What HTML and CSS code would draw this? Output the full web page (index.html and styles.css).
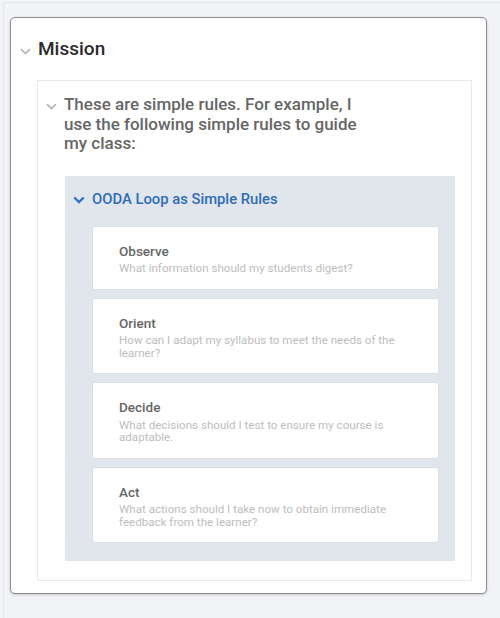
FILE: index.html
```html
<!DOCTYPE html>
<html>
<head>
<meta charset="utf-8">
<link rel="stylesheet" href="styles.css">
</head>
<body>
<div class="page">
  <section class="outer">
    <header class="outer-head">
      <svg class="chev chev-gray" width="11" height="7" viewBox="0 0 11 7"><path d="M1 1.2 L5.5 5.5 L10 1.2" fill="none" stroke="#b5b5b5" stroke-width="1.7"/></svg>
      <h1 class="outer-title">Mission</h1>
    </header>
    <div class="inner">
      <div class="inner-head">
        <svg class="chev chev-gray2" width="11" height="7" viewBox="0 0 11 7"><path d="M1 1.2 L5.5 5.5 L10 1.2" fill="none" stroke="#b5b5b5" stroke-width="1.7"/></svg>
        <p class="inner-title">These are simple rules. For example, I use the following simple rules to guide my class:</p>
      </div>
      <div class="panel">
        <div class="panel-head">
          <svg class="chev chev-blue" width="12" height="8" viewBox="0 0 12 8"><path d="M1.3 1.5 L6 6 L10.7 1.5" fill="none" stroke="#2f72c2" stroke-width="2.4"/></svg>
          <h2 class="panel-title">OODA Loop as Simple Rules</h2>
        </div>
        <div class="cards">
          <div class="card">
            <div class="card-title">Observe</div>
            <div class="card-desc">What information should my students digest?</div>
          </div>
          <div class="card">
            <div class="card-title">Orient</div>
            <div class="card-desc">How can I adapt my syllabus to meet the needs of the learner?</div>
          </div>
          <div class="card">
            <div class="card-title">Decide</div>
            <div class="card-desc">What decisions should I test to ensure my course is adaptable.</div>
          </div>
          <div class="card">
            <div class="card-title">Act</div>
            <div class="card-desc">What actions should I take now to obtain immediate feedback from the learner?</div>
          </div>
        </div>
      </div>
    </div>
  </section>
</div>
</body>
</html>
```

FILE: styles.css
```css
* { box-sizing: border-box; }
html, body {
  margin: 0;
  padding: 0;
  background: #f2f3f6;
  font-family: Roboto, "Liberation Sans", Arial, sans-serif;
}
.page {
  width: 500px;
  height: 618px;
  border-top: 1px solid #e4e6ea;
  border-left: 1px solid #e4e6ea;
  margin-top: 2px;
  margin-left: 3px;
  padding: 14px 0 0 6px;
}
.outer {
  width: 477px;
  height: 577px;
  background: #fff;
  border: 1.5px solid #8c8c8c;
  border-radius: 5px;
  box-shadow: 0 1px 3px rgba(0,0,0,0.18);
  padding: 19px 14px 12px 26px;
  display: flex;
  flex-direction: column;
}
.outer-head {
  display: flex;
  align-items: center;
  margin-left: -17px;
  height: 24px;
}
.chev { flex: none; }
.chev-gray { margin-right: 7px; margin-top: 5px; }
.outer-title {
  margin: 0;
  font-size: 19px;
  font-weight: 500;
  color: #2c2c2c;
  line-height: 24px;
}
.inner {
  margin-top: 19px;
  flex: 1;
  border: 1px solid #e9e9ec;
  padding: 14px 16px 19px 8px;
  display: flex;
  flex-direction: column;
}
.inner-head {
  display: flex;
  align-items: flex-start;
}
.chev-gray2 { margin-right: 7px; margin-top: 8px; }
.inner-title {
  margin: 0;
  font-size: 17px;
  font-weight: 500;
  color: #666;
  line-height: 19.5px;
  width: 305px;
}
.panel {
  margin-top: 22px;
  margin-left: 19px;
  flex: 1;
  background: #e1e5ec;
  padding: 13px 16px 17px 8px;
}
.panel-head {
  display: flex;
  align-items: center;
  height: 20px;
}
.chev-blue { margin-right: 7px; margin-top: 3px; }
.panel-title {
  margin: 0;
  font-size: 14.8px;
  font-weight: 500;
  color: #2f6db8;
  line-height: 20px;
}
.cards {
  margin-top: 17px;
  margin-left: 19px;
  display: flex;
  flex-direction: column;
  gap: 8px;
}
.card {
  background: #fff;
  border: 1px solid #d9dde4;
  border-radius: 3px;
  padding: 16px 30px 14px 26px;
}
.card-title {
  font-size: 13.5px;
  font-weight: 500;
  color: #666;
  line-height: 16px;
}
.card-desc {
  margin-top: 3.5px;
  font-size: 11.6px;
  color: #bdbdbd;
  line-height: 12.5px;
}
```
